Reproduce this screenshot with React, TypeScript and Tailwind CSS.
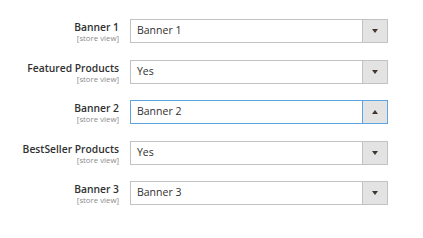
import { useState } from "react";

type Row = { label: string; value: string; open?: boolean };

const rows: Row[] = [
  { label: "Banner 1", value: "Banner 1" },
  { label: "Featured Products", value: "Yes" },
  { label: "Banner 2", value: "Banner 2", open: true },
  { label: "BestSeller Products", value: "Yes" },
  { label: "Banner 3", value: "Banner 3" },
];

const SelectField = ({ value, open }: { value: string; open?: boolean }) => {
  return (
    <div
      className={`flex h-[24px] w-[258px] border bg-white ${
        open ? "border-[#5ea4e0]" : "border-[#c2c2c2]"
      }`}
    >
      <div className="flex flex-1 items-center pl-[6px] text-[10.5px] text-[#303030]">{value}</div>
      <div
        className={`flex w-[25px] items-center justify-center border-l bg-[#e3e3e3] ${
          open ? "border-[#5ea4e0]" : "border-[#c2c2c2]"
        }`}
      >
        {open ? (
          <span className="h-0 w-0 border-x-[3px] border-b-[4px] border-x-transparent border-b-[#41362f]" />
        ) : (
          <span className="h-0 w-0 border-x-[3px] border-t-[4px] border-x-transparent border-t-[#41362f]" />
        )}
      </div>
    </div>
  );
};

export default function App() {
  const [items] = useState(rows);

  return (
    <div className="h-[238px] w-[423px] bg-white pt-[19px] font-['Open_Sans',sans-serif]">
      <div className="flex flex-col gap-[16.5px]">
        {items.map((row) => (
          <div key={row.label} className="flex h-[24px] items-start">
            {/* Label */}
            <div className="flex w-[119px] flex-col items-end pt-[1px]">
              <span className="text-[10.3px] leading-[14px] font-semibold text-[#303030]">{row.label}</span>
              <span className="text-[7.8px] leading-[9px] text-[#8a8a8a]">[store view]</span>
            </div>
            {/* Select */}
            <div className="ml-[11px]">
              <SelectField value={row.value} open={row.open} />
            </div>
          </div>
        ))}
      </div>
    </div>
  );
}
